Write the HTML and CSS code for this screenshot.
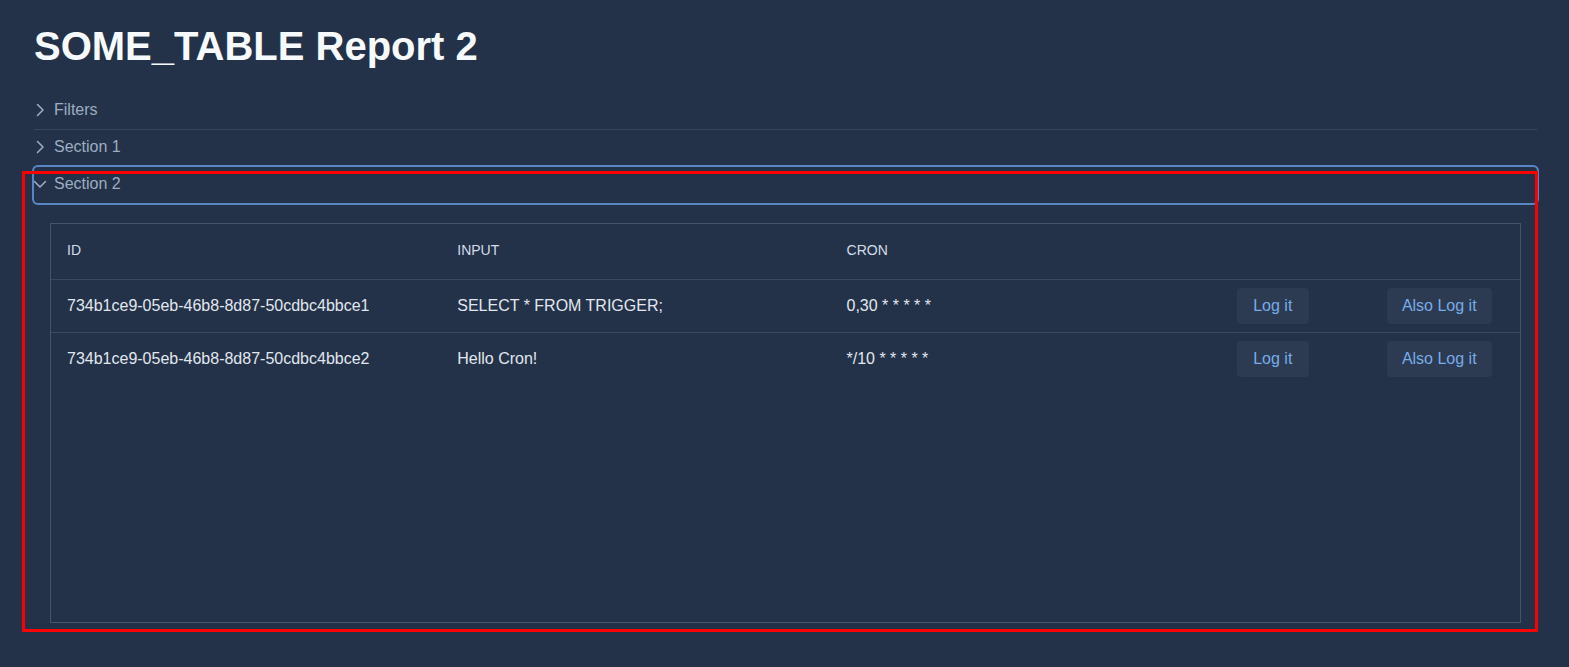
FILE: index.html
```html
<!DOCTYPE html>
<html lang="en">
<head>
<meta charset="utf-8">
<title>SOME_TABLE Report 2</title>
<link rel="stylesheet" href="styles.css">
</head>
<body>
<div class="page">
  <h1 class="title">SOME_TABLE Report 2</h1>
  <div class="accordion">
    <div class="acc-item">
      <button class="acc-btn">
        <svg class="chev collapsed" viewBox="0 0 14 14" width="14" height="14"><path d="M1.5 4.5 L7 10 L12.5 4.5" /></svg>
        <span>Filters</span>
      </button>
    </div>
    <div class="acc-item bordered">
      <button class="acc-btn">
        <svg class="chev collapsed" viewBox="0 0 14 14" width="14" height="14"><path d="M1.5 4.5 L7 10 L12.5 4.5" /></svg>
        <span>Section 1</span>
      </button>
    </div>
    <div class="acc-item bordered">
      <button class="acc-btn focused">
        <svg class="chev" viewBox="0 0 14 14" width="14" height="14"><path d="M1.5 4.5 L7 10 L12.5 4.5" /></svg>
        <span>Section 2</span>
      </button>
      <div class="acc-panel">
        <div class="table-wrap">
          <table class="data">
            <colgroup>
              <col class="c-id"><col class="c-input"><col class="c-cron"><col class="c-a1"><col class="c-a2">
            </colgroup>
            <thead>
              <tr><th>ID</th><th>INPUT</th><th>CRON</th><th></th><th></th></tr>
            </thead>
            <tbody>
              <tr>
                <td>734b1ce9-05eb-46b8-8d87-50cdbc4bbce1</td>
                <td>SELECT * FROM TRIGGER;</td>
                <td>0,30 * * * * *</td>
                <td><button class="btn">Log it</button></td>
                <td><button class="btn">Also Log it</button></td>
              </tr>
              <tr class="last">
                <td>734b1ce9-05eb-46b8-8d87-50cdbc4bbce2</td>
                <td>Hello Cron!</td>
                <td>*/10 * * * * *</td>
                <td><button class="btn">Log it</button></td>
                <td><button class="btn">Also Log it</button></td>
              </tr>
            </tbody>
          </table>
        </div>
      </div>
    </div>
  </div>
  <div class="annotation"></div>
</div>
</body>
</html>
```
FILE: styles.css
```css
* { box-sizing: border-box; }
html, body {
  margin: 0;
  padding: 0;
  background: #233248;
  font-family: "Liberation Sans", Arial, sans-serif;
  height: 100%;
}
.page {
  position: relative;
  padding: 0 32px 0 34px;
  min-height: 667px;
}
.title {
  margin: 0;
  padding-top: 22px;
  font-size: 40px;
  line-height: 48px;
  font-weight: 700;
  color: #f7fafc;
}
.accordion {
  margin-top: 23px;
}
.acc-item.bordered {
  border-top: 1px solid #37465b;
}
.acc-btn {
  display: flex;
  align-items: center;
  width: 100%;
  height: 36px;
  padding: 0 0 2px 0;
  margin: 0;
  border: none;
  background: transparent;
  font-family: inherit;
  font-size: 16px;
  line-height: 24px;
  color: #9eadc1;
  text-align: left;
  border-radius: 4px;
}
.acc-btn.focused {
  box-shadow: 0 0 0 2px #5886c4;
}
.chev {
  flex: none;
  margin-left: -1px;
  margin-right: 7px;
  fill: none;
  stroke: #9eadc1;
  stroke-width: 1.5;
  stroke-linecap: round;
  stroke-linejoin: round;
}
.chev.collapsed {
  transform: rotate(-90deg);
}
.acc-panel {
  padding: 20px 16px 20px 16px;
}
.table-wrap {
  height: 400px;
  border: 1px solid #46546a;
}
.data {
  width: 100%;
  table-layout: fixed;
  border-collapse: collapse;
}
.c-id { width: 390px; }
.c-input { width: 389px; }
.c-cron { width: 390px; }
.c-a1 { width: 150px; }
.c-a2 { width: 149px; }
.data th {
  height: 55px;
  padding: 0 16px 2px 16px;
  text-align: left;
  font-weight: 400;
  font-size: 14px;
  color: #d3dce8;
  border-bottom: 1px solid #3a495e;
}
.data td {
  height: 53px;
  padding: 0 16px;
  font-size: 16px;
  color: #e1e7ef;
  border-bottom: 1px solid #3a495e;
  white-space: nowrap;
}
.data tr.last td {
  border-bottom: none;
}
.btn {
  height: 36px;
  min-width: 72px;
  padding: 0 15px;
  border: none;
  border-radius: 4px;
  background: #2c3b51;
  color: #78acea;
  font-family: inherit;
  font-size: 16px;
}
.annotation {
  position: absolute;
  left: 22px;
  top: 171px;
  width: 1516px;
  height: 461px;
  border: 3px solid #ff0000;
  pointer-events: none;
}
```
